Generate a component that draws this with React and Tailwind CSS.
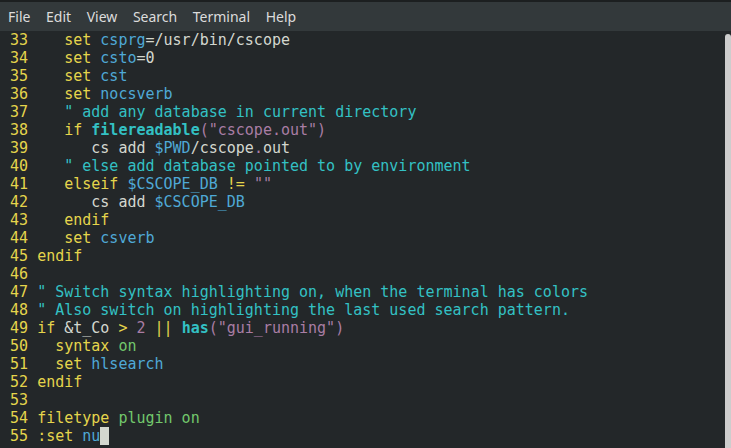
const Y = "text-[#e5d54c]";
const B = "text-[#4fa9d6]";
const C = "text-[#33c1c4]";
const CB = "text-[#33c1c4] font-bold";
const P = "text-[#a97da4]";
const G = "text-[#72c76c]";
const W = "text-[#d3d7cf]";

const lines = [
  [33, [["   set ", Y], ["csprg", B], ["=/usr/bin/cscope", W]]],
  [34, [["   set ", Y], ["csto", B], ["=0", W]]],
  [35, [["   set ", Y], ["cst", B]]],
  [36, [["   set ", Y], ["nocsverb", B]]],
  [37, [["   ", W], ['" add any database in current directory', C]]],
  [38, [["   if ", Y], ["filereadable", CB], ["(", P], ['"cscope.out"', P], [")", P]]],
  [39, [["      cs add ", W], ["$PWD", B], ["/cscope", W], [".", P], ["out", W]]],
  [40, [["   ", W], ['" else add database pointed to by environment', C]]],
  [41, [["   elseif ", Y], ["$CSCOPE_DB", B], [" != ", Y], ['""', P]]],
  [42, [["      cs add ", W], ["$CSCOPE_DB", B]]],
  [43, [["   endif", Y]]],
  [44, [["   set ", Y], ["csverb", B]]],
  [45, [["endif", Y]]],
  [46, []],
  [47, [['" Switch syntax highlighting on, when the terminal has colors', C]]],
  [48, [['" Also switch on highlighting the last used search pattern.', C]]],
  [49, [["if ", Y], ["&t_Co", W], [" > ", Y], ["2", P], [" || ", Y], ["has", CB], ["(", P], ['"gui_running"', P], [")", P]]],
  [50, [["  syntax ", Y], ["on", G]]],
  [51, [["  set ", Y], ["hlsearch", B]]],
  [52, [["endif", Y]]],
  [53, []],
  [54, [["filetype ", Y], ["plugin on", G]]],
  [55, [[":set ", Y], ["nu", B]]],
];

export default function App() {
  return (
    <div className="w-[731px] h-[448px] bg-[#232729] flex flex-col overflow-hidden">
      <div className="h-[2px] bg-[#1c1f20]" />
      <div
        className="h-[29px] bg-[#33393b] flex items-center pl-[8px] gap-[15.6px] text-[14px] text-[#dcdcdc] pb-[1px]"
        style={{ fontFamily: '"Noto Sans", "DejaVu Sans", sans-serif' }}
      >
        <span>File</span>
        <span>Edit</span>
        <span>View</span>
        <span>Search</span>
        <span>Terminal</span>
        <span>Help</span>
      </div>
      <div className="flex-1 flex min-h-0">
        <div
          className="flex-1 pl-[1px] text-[15px] leading-[18px] whitespace-pre"
          style={{ fontFamily: '"DejaVu Sans Mono", monospace' }}
        >
          {lines.map(([n, segs]) => (
            <div key={n} className="h-[18px] flex">
              <span className={Y}>{" " + n + " "}</span>
              {segs.map(([t, c], i) => (
                <span key={i} className={c}>{t}</span>
              ))}
              {n === 55 && <span className="inline-block w-[9px] h-[18px] bg-[#d3d7cf]" />}
            </div>
          ))}
        </div>
        <div className="w-[9px] bg-[#232729] pl-[3px] pt-[3px]">
          <div className="w-full h-full bg-[#cdcdcd] rounded-t-[3px]" />
        </div>
      </div>
    </div>
  );
}
